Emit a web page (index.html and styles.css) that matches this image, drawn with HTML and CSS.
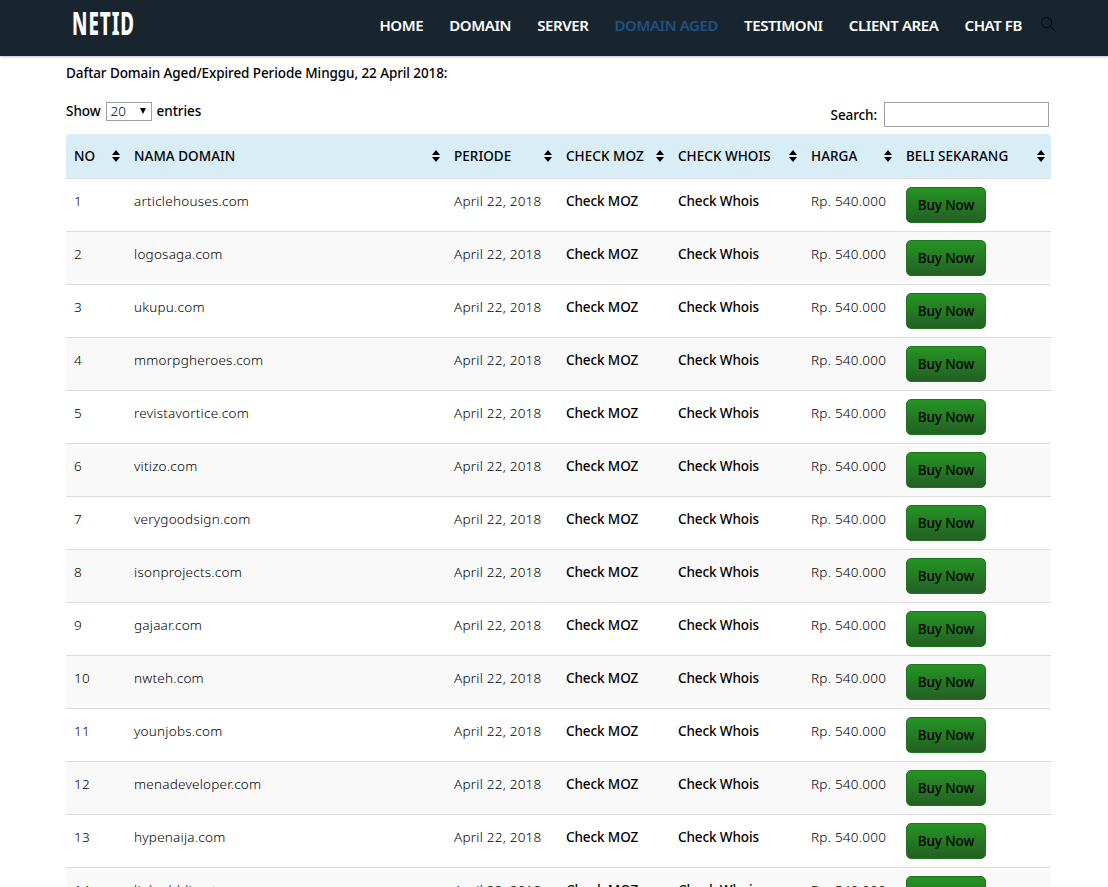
FILE: index.html
```html
<!DOCTYPE html>
<html lang="id">
<head>
	<meta charset="UTF-8">
	<title>NETID - Domain Aged</title>
	<link rel="stylesheet" href="styles.css">
</head>
<body>
	<!-- Header -->
	<header id="header">
		<a href="#" class="logo">NETID</a>
		<nav class="menu">
			<a href="#">HOME</a>
			<a href="#">DOMAIN</a>
			<a href="#">SERVER</a>
			<a href="#" class="active">DOMAIN AGED</a>
			<a href="#">TESTIMONI</a>
			<a href="#">CLIENT AREA</a>
			<a href="#">CHAT FB</a>
			<svg class="search-icon" width="16" height="17" viewBox="0 0 16 17" fill="none" stroke="#05090c" stroke-width="1">
				<circle cx="6.5" cy="6.5" r="5.2"/>
				<path d="M10.5 10.5l4.5 5"/>
			</svg>
		</nav>
	</header>

	<!-- Content -->
	<main class="content">
		<p class="title">Daftar Domain Aged/Expired Periode Minggu, 22 April 2018:</p>
		<div class="controls">
			<label class="length">Show <span class="select">20<i></i></span> entries</label>
			<label class="filter">Search: <input type="text"></label>
		</div>
		<table class="domains">
			<colgroup>
				<col class="c-no"><col class="c-name"><col class="c-date"><col class="c-moz"><col class="c-whois"><col class="c-price"><col class="c-buy">
			</colgroup>
			<thead>
				<tr>
					<th><div>NO<i class="sort"></i></div></th>
					<th><div>NAMA DOMAIN<i class="sort"></i></div></th>
					<th><div>PERIODE<i class="sort"></i></div></th>
					<th><div>CHECK MOZ<i class="sort"></i></div></th>
					<th><div>CHECK WHOIS<i class="sort"></i></div></th>
					<th><div>HARGA<i class="sort"></i></div></th>
					<th><div>BELI SEKARANG<i class="sort"></i></div></th>
				</tr>
			</thead>
			<tbody id="rows"></tbody>
		</table>
	</main>
	<script src="main.js"></script>
</body>
</html>
```
FILE: styles.css
```css
body {
	margin: 0;
	height: 887px;
	overflow: hidden;
	background: #fff;
	color: #000;
	font: 14px/28px "Noto Sans", sans-serif;
}
a {
	color: inherit;
	text-decoration: none;
}

#header {
	display: flex;
	justify-content: space-between;
	box-sizing: border-box;
	height: 56px;
	padding: 0 52px 0 72px;
	background: #19252e;
	box-shadow: 0 1px 2px #b9c0cc;
	color: #fff;
}
.logo {
	width: 62px;
	font-size: 31.5px;
	font-weight: 800;
	line-height: 46px;
	letter-spacing: 1.6px;
	transform: scaleX(.595);
	transform-origin: 0 0;
}
.menu {
	display: flex;
	gap: 26.1px;
	font-size: 15px;
	font-weight: 600;
	line-height: 51px;
	letter-spacing: -.42px;
	white-space: nowrap;
}
.menu .active {
	color: #1d5285;
}
.search-icon {
	margin: 16px 0 0 -8px;
}

.content {
	width: 985px;
	margin: 0 0 0 66px;
}
.title {
	margin: 3px 0 0;
	font-size: 13.5px;
	font-weight: 500;
	letter-spacing: -.09px;
}
.controls {
	display: flex;
	justify-content: space-between;
	height: 47px;
	font-size: 13.5px;
	font-weight: 500;
}
.length {
	display: flex;
	gap: 5px;
	align-items: center;
	height: 48px;
	letter-spacing: -.05px;
}
.select {
	display: flex;
	justify-content: space-between;
	align-items: center;
	box-sizing: border-box;
	width: 46px;
	height: 19px;
	padding: 0 5px 0 4px;
	border: 1px solid #a0a0a0;
	font-weight: 350;
}
.select i {
	border: 3.5px solid transparent;
	border-top: 6px solid #000;
	border-bottom: 0;
}
.filter {
	display: flex;
	gap: 7px;
	align-items: center;
	height: 55px;
	padding-right: 2px;
	letter-spacing: -.1px;
}
.filter input {
	box-sizing: border-box;
	width: 165px;
	height: 25px;
	border: 1px solid #a0a0a0;
}

.domains {
	width: 985px;
	table-layout: fixed;
	border-spacing: 0;
}
.c-no { width: 60px; }
.c-name { width: 320px; }
.c-date { width: 112px; }
.c-moz { width: 112px; }
.c-whois { width: 133px; }
.c-price { width: 95px; }
.c-buy { width: 153px; }

.domains th {
	height: 44px;
	padding: 0 6px 0 8px;
	background: #d9edf7;
	font-size: 13.5px;
	font-weight: 500;
	letter-spacing: .03px;
	text-align: left;
	white-space: nowrap;
}
.domains th:first-child { border-radius: 4px 0 0 0; }
.domains th:last-child { border-radius: 0 4px 0 0; }
.domains th div {
	display: flex;
	justify-content: space-between;
	align-items: center;
}
.sort::before,
.sort::after {
	content: "";
	display: block;
	border: 4.5px solid transparent;
}
.sort::before {
	margin-bottom: 2px;
	border-top: 0;
	border-bottom: 5px solid #000;
}
.sort::after {
	border-bottom: 0;
	border-top: 5px solid #000;
}

.domains td {
	height: 36px;
	padding: 8px 0 8px 8px;
	border-top: 1px solid #ddd;
	font-size: 13.5px;
	font-weight: 350;
	letter-spacing: .23px;
	vertical-align: top;
	white-space: nowrap;
}
.domains tr:nth-child(even) td {
	background: #f9f9f9;
}
.domains td.link {
	font-weight: 500;
	letter-spacing: -.1px;
}
.buy {
	display: block;
	box-sizing: border-box;
	width: 80px;
	height: 36px;
	border: 1px solid #1f7420;
	border-radius: 5px;
	background: linear-gradient(#259423, #235f24);
	font-weight: 500;
	line-height: 35px;
	letter-spacing: -.1px;
	text-align: center;
}
```
FILE: main.js
```js
var domains = [
	'articlehouses.com', 'logosaga.com', 'ukupu.com', 'mmorpgheroes.com',
	'revistavortice.com', 'vitizo.com', 'verygoodsign.com', 'isonprojects.com',
	'gajaar.com', 'nwteh.com', 'younjobs.com', 'menadeveloper.com',
	'hypenaija.com', 'linkedddirect.com'
];

document.getElementById('rows').innerHTML = domains.map(function (name, i) {
	return '<tr><td>' + (i + 1) + '</td>' +
		'<td>' + name + '</td>' +
		'<td>April 22, 2018</td>' +
		'<td class="link"><a href="#">Check MOZ</a></td>' +
		'<td class="link"><a href="#">Check Whois</a></td>' +
		'<td>Rp. 540.000</td>' +
		'<td><a href="#" class="buy">Buy Now</a></td></tr>';
}).join('');
```
